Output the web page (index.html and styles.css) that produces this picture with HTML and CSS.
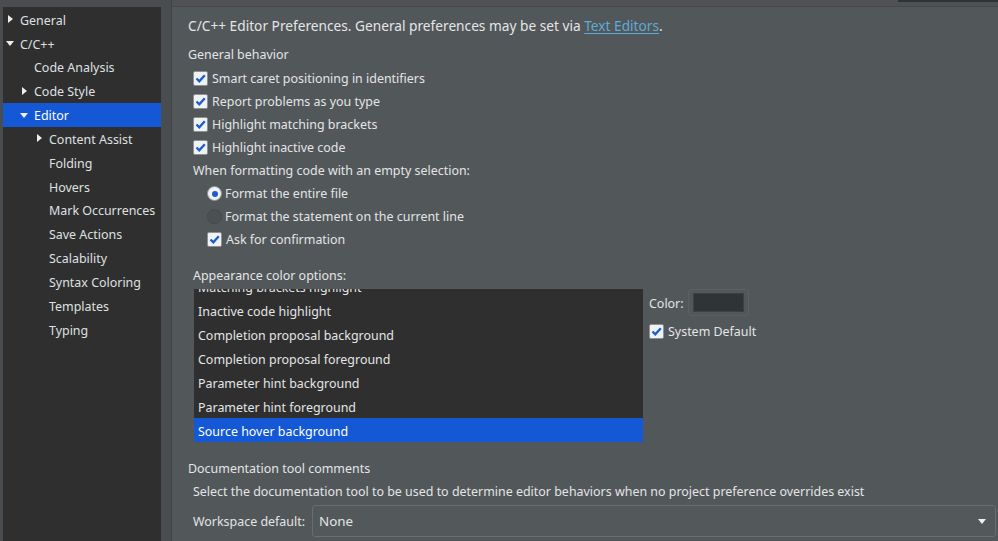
FILE: index.html
```html
<!DOCTYPE html>
<html>
<head>
<meta charset="utf-8">
<link rel="stylesheet" href="styles.css">
</head>
<body>
<div class="app">
  <aside class="side">
    <ul class="tree">
      <li class="node l0"><span class="tw right"></span>General</li>
      <li class="node l0"><span class="tw down"></span>C/C++</li>
      <li class="node l1"><span class="tw none"></span>Code Analysis</li>
      <li class="node l1"><span class="tw right"></span>Code Style</li>
      <li class="node l1 sel"><span class="tw down"></span>Editor</li>
      <li class="node l2"><span class="tw right"></span>Content Assist</li>
      <li class="node l2"><span class="tw none"></span>Folding</li>
      <li class="node l2"><span class="tw none"></span>Hovers</li>
      <li class="node l2"><span class="tw none"></span>Mark Occurrences</li>
      <li class="node l2"><span class="tw none"></span>Save Actions</li>
      <li class="node l2"><span class="tw none"></span>Scalability</li>
      <li class="node l2"><span class="tw none"></span>Syntax Coloring</li>
      <li class="node l2"><span class="tw none"></span>Templates</li>
      <li class="node l2"><span class="tw none"></span>Typing</li>
    </ul>
  </aside>
  <main class="main">
    <div class="topbar"><div class="topbar-tab"></div></div>
    <div class="content">
      <div class="header">C/C++ Editor Preferences. General preferences may be set via <a class="link">Text Editors</a>.</div>

      <section class="group">
        <div class="group-title">General behavior</div>
        <label class="opt"><span class="cb on"><svg viewBox="0 0 13 13"><path d="M2.5 6.5 L5.3 9.3 L10.8 3.2"/></svg></span>Smart caret positioning in identifiers</label>
        <label class="opt"><span class="cb on"><svg viewBox="0 0 13 13"><path d="M2.5 6.5 L5.3 9.3 L10.8 3.2"/></svg></span>Report problems as you type</label>
        <label class="opt"><span class="cb on"><svg viewBox="0 0 13 13"><path d="M2.5 6.5 L5.3 9.3 L10.8 3.2"/></svg></span>Highlight matching brackets</label>
        <label class="opt"><span class="cb on"><svg viewBox="0 0 13 13"><path d="M2.5 6.5 L5.3 9.3 L10.8 3.2"/></svg></span>Highlight inactive code</label>
        <div class="sub-title">When formatting code with an empty selection:</div>
        <label class="opt indent"><span class="rb on"></span>Format the entire file</label>
        <label class="opt indent"><span class="rb"></span>Format the statement on the current line</label>
        <label class="opt indent"><span class="cb on"><svg viewBox="0 0 13 13"><path d="M2.5 6.5 L5.3 9.3 L10.8 3.2"/></svg></span>Ask for confirmation</label>
      </section>

      <section class="appearance">
        <div class="sub-title app-title">Appearance color options:</div>
        <div class="app-row">
          <div class="list">
            <ul class="list-inner">
              <li>Matching brackets highlight</li>
              <li>Inactive code highlight</li>
              <li>Completion proposal background</li>
              <li>Completion proposal foreground</li>
              <li>Parameter hint background</li>
              <li>Parameter hint foreground</li>
              <li class="sel">Source hover background</li>
            </ul>
          </div>
          <div class="color-panel">
            <div class="color-row">
              <span class="color-label">Color:</span>
              <span class="color-btn"><span class="swatch"></span></span>
            </div>
            <label class="opt sysdef"><span class="cb on"><svg viewBox="0 0 13 13"><path d="M2.5 6.5 L5.3 9.3 L10.8 3.2"/></svg></span>System Default</label>
          </div>
        </div>
      </section>

      <section class="doc">
        <div class="group-title">Documentation tool comments</div>
        <div class="doc-desc">Select the documentation tool to be used to determine editor behaviors when no project preference overrides exist</div>
        <div class="doc-row">
          <span class="doc-label">Workspace default:</span>
          <div class="combo"><span>None</span><span class="combo-arrow"></span></div>
        </div>
      </section>
    </div>
  </main>
</div>
</body>
</html>
```

FILE: styles.css
```css
* { box-sizing: border-box; }
html, body {
  margin: 0;
  padding: 0;
  width: 998px;
  height: 541px;
  overflow: hidden;
  background: #52575a;
  font-family: "Noto Sans", "Open Sans", sans-serif;
  font-size: 12.45px;
  color: #e3e5e6;
}
.app {
  display: flex;
  width: 998px;
  height: 541px;
}

/* Sidebar */
.side {
  width: 172px;
  flex: none;
  background: #4a4d50;
  padding: 7px 10px 0 3px;
  border-right: 1px solid #414447;
  display: flex;
}
.tree {
  list-style: none;
  margin: 0;
  padding: 0.3px 0 0 0;
  flex: 1;
  background: #2f2f2f;
}
.node {
  height: 23.85px;
  padding-top: 2px;
  display: flex;
  align-items: center;
  color: #dfe0e1;
  white-space: nowrap;
}
.node.sel { background: #1458d6; color: #ffffff; }
.node.l0 { padding-left: 3px; }
.node.l1 { padding-left: 17px; }
.node.l2 { padding-left: 32px; }
.tw {
  width: 14px;
  height: 10px;
  flex: none;
  position: relative;
}
.tw.right::before {
  content: "";
  position: absolute;
  left: 2px;
  top: 0;
  border-left: 5px solid #eeeeee;
  border-top: 4.5px solid transparent;
  border-bottom: 4.5px solid transparent;
}
.tw.down::before {
  content: "";
  position: absolute;
  left: 0;
  top: 2px;
  border-top: 5px solid #eeeeee;
  border-left: 4.5px solid transparent;
  border-right: 4.5px solid transparent;
}

/* Main */
.main {
  flex: 1;
  display: flex;
  flex-direction: column;
  min-width: 0;
}
.topbar {
  height: 7px;
  flex: none;
  background: #4e5255;
  border-bottom: 1px solid #45494b;
  display: flex;
  justify-content: flex-end;
}
.topbar-tab {
  width: 100px;
  height: 2px;
  background: #2e3336;
}
.content {
  padding: 6px 0 0 16px;
}
.header {
  height: 24px;
  padding-top: 2px;
  line-height: 22px;
  font-size: 13.7px;
  white-space: nowrap;
}
.link {
  color: #5eaad8;
  text-decoration: underline;
  text-underline-offset: 2px;
}
.group { margin-top: 5px; }
.group-title {
  height: 24px;
  padding-top: 2px;
  line-height: 22px;
  white-space: nowrap;
}
.opt {
  height: 23px;
  padding-top: 2px;
  display: flex;
  align-items: center;
  padding-left: 5px;
  white-space: nowrap;
}
.opt.indent { padding-left: 19px; }
.sub-title {
  height: 23px;
  padding-top: 2px;
  line-height: 21px;
  padding-left: 5px;
  white-space: nowrap;
}
.cb {
  width: 15px;
  height: 15px;
  flex: none;
  margin-right: 4px;
  background: #f1f2f3;
  border: 1px solid #8d9194;
  border-radius: 2px;
  display: flex;
  align-items: center;
  justify-content: center;
}
.cb svg { width: 13px; height: 13px; }
.cb svg path {
  fill: none;
  stroke: #1a5cd4;
  stroke-width: 2.3;
}
.rb {
  width: 15px;
  height: 15px;
  flex: none;
  margin-right: 3px;
  border-radius: 50%;
  background: #4b5053;
  border: 1px solid #464a4d;
  display: flex;
  align-items: center;
  justify-content: center;
}
.rb.on {
  background: #f1f2f3;
  border-color: #8d9194;
}
.rb.on::after {
  content: "";
  width: 6px;
  height: 6px;
  border-radius: 50%;
  background: #1a5cd4;
}

/* Appearance */
.appearance { margin-top: 13px; }
.app-title { height: 24px; line-height: 22px; }
.app-row {
  display: flex;
  margin-top: 2px;
  padding-left: 6px;
}
.list {
  width: 449px;
  height: 153px;
  background: #2f2f2f;
  overflow: hidden;
  flex: none;
}
.list-inner {
  list-style: none;
  margin: -15px 0 0 0;
  padding: 0;
}
.list-inner li {
  height: 24px;
  padding-top: 4px;
  line-height: 20px;
  padding-left: 4px;
  color: #e3e5e6;
  white-space: nowrap;
}
.list-inner li.sel { background: #1458d6; color: #ffffff; }
.color-panel {
  padding-left: 6px;
}
.color-row {
  display: flex;
  align-items: center;
  height: 27px;
}
.color-label { width: 39px; flex: none; padding-top: 2px; }
.color-btn {
  width: 61px;
  height: 27px;
  border: 1px solid #5c6063;
  border-radius: 3px;
  padding: 3px 4px;
  display: flex;
}
.swatch {
  flex: 1;
  background: #2f3436;
  border: 1px solid #3c4143;
}
.opt.sysdef {
  padding-left: 0;
  margin-top: 3px;
  height: 23px;
}

/* Documentation */
.doc { margin-top: 14px; }
.doc-desc {
  height: 22px;
  padding-top: 2px;
  line-height: 20px;
  padding-left: 5px;
  white-space: nowrap;
}
.doc-row {
  display: flex;
  align-items: center;
  margin-top: 3px;
  padding-left: 5px;
}
.doc-label { width: 119px; flex: none; white-space: nowrap; }
.combo {
  width: 684px;
  height: 32px;
  border: 1px solid #696d70;
  border-radius: 3px;
  background: #53585b;
  display: flex;
  align-items: center;
  justify-content: space-between;
  padding: 0 9px 0 6px;
  font-size: 13.4px;
}
.combo-arrow {
  width: 0;
  height: 0;
  border-top: 5px solid #f0f0f0;
  border-left: 4.5px solid transparent;
  border-right: 4.5px solid transparent;
}
```
